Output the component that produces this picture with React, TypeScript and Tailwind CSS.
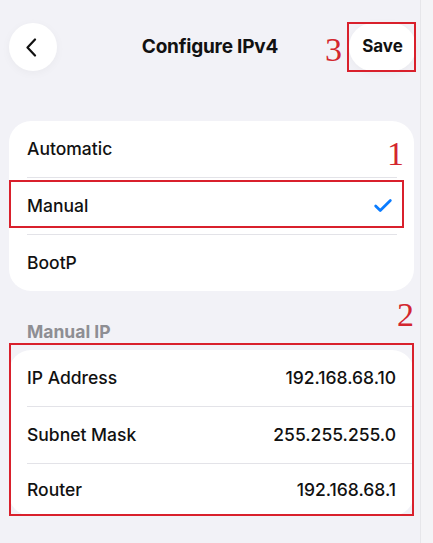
import { Check } from "lucide-react";

type Row = { label: string; value?: string };

const modes = ["Automatic", "Manual", "BootP"];

const manualRows: Row[] = [
  { label: "IP Address", value: "192.168.68.10" },
  { label: "Subnet Mask", value: "255.255.255.0" },
  { label: "Router", value: "192.168.68.1" },
];

function Marker({ n, className }: { n: string; className: string }) {
  return (
    <span
      className={`absolute text-[34px] leading-none text-[#d3262e] ${className}`}
      style={{ fontFamily: '"Liberation Serif", serif' }}
    >
      {n}
    </span>
  );
}

function Divider() {
  return <div className="ml-[18px] mr-[17px] h-px bg-[#e3e3e8]" />;
}

export default function App() {
  return (
    <div
      className="flex h-[543px] w-[433px] overflow-hidden bg-[#f2f2f7] text-[#111]"
      style={{ fontFamily: "Inter, 'Noto Sans', sans-serif" }}
    >
      <div className="w-[421px] shrink-0 border-r border-[#e6e6ea]">
        {/* header */}
        <header className="mt-[23px] flex h-[48px] items-center pl-[9px] pr-[4px]">
          <button className="flex h-[48px] w-[48px] items-center justify-center rounded-full bg-white shadow-[0_2px_10px_rgba(0,0,0,0.04)]">
            <svg width="12" height="19" viewBox="0 0 12 19" fill="none" className="-ml-[4px]">
              <path d="M10 1.5 2.5 9.5 10 17.5" stroke="#111" strokeWidth="2.2" strokeLinecap="round" strokeLinejoin="round" />
            </svg>
          </button>
          <h1 className="flex-1 pl-[14px] text-center text-[19px] font-bold tracking-[-0.2px]">Configure IPv4</h1>
          <div className="relative">
            <Marker n="3" className="-left-[24px] top-[10px]" />
            <button className="flex h-[48px] w-[67px] items-center justify-center rounded-full bg-white text-[17px] font-bold shadow-[0_2px_10px_rgba(0,0,0,0.04)]">
              Save
            </button>
            <div className="absolute -left-[2px] -top-[1px] h-[50px] w-[69px] border-2 border-[#d9202c]" />
          </div>
        </header>

        {/* mode card */}
        <section className="relative ml-[9px] mr-[6px] mt-[50px] rounded-[22px] bg-white">
          <Marker n="1" className="right-[10px] top-[16px]" />
          {modes.map((m, i) => (
            <div key={m}>
              {i > 0 && <Divider />}
              <div className="relative flex h-[56px] items-center justify-between px-[18px]">
                <span className="text-[17.5px] font-medium">{m}</span>
                {m === "Manual" && (
                  <>
                    <Check className="mr-[2px] h-[22px] w-[22px] text-[#0a7cff]" strokeWidth={3} />
                    <div className="absolute left-0 right-[10px] top-[2px] h-[48px] border-2 border-[#d9202c]" />
                  </>
                )}
              </div>
            </div>
          ))}
        </section>

        {/* manual ip */}
        <div className="relative mt-[31px] px-[27px]">
          <h2 className="text-[17.5px] font-bold leading-[20px] text-[#8e8e93]">Manual IP</h2>
          <Marker n="2" className="right-[6px] -top-[24px]" />
        </div>

        <div className="relative ml-[9px] mr-[6px] mt-[8px]">
          <section className="overflow-hidden rounded-[22px] bg-white">
            {manualRows.map((r, i) => (
              <div key={r.label}>
                {i > 0 && <div className="ml-[18px] h-px bg-[#e3e3e8]" />}
                <div className={`flex items-center justify-between px-[18px] ${i === 2 ? "h-[52px]" : "h-[56px]"}`}>
                  <span className="text-[17.5px] font-medium">{r.label}</span>
                  <span className="text-[17.5px] font-medium">{r.value}</span>
                </div>
              </div>
            ))}
          </section>
          <div className="absolute -top-[7px] left-0 right-0 h-[173px] border-2 border-[#d9202c]" />
        </div>
      </div>
      <div className="flex-1 bg-[#f4f4f7]" />
    </div>
  );
}
